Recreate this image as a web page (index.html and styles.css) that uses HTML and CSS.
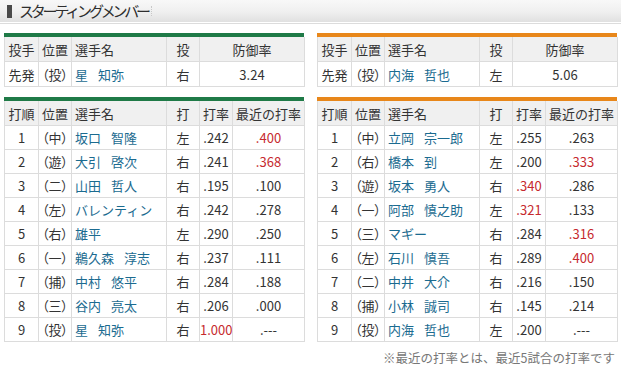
FILE: index.html
```html
<!DOCTYPE html>
<html lang="ja">
<head>
<meta charset="utf-8">
<title>スターティングメンバー</title>
<link rel="stylesheet" href="styles.css">
</head>
<body>
<div class="title-wrap">
  <div class="title-bar">
    <h2 class="title">スターティングメンバー</h2>
    <span class="title-dots"></span>
  </div>
</div>

<div class="columns">
  <div class="col">
    <div class="box green">
      <table class="pitch">
        <colgroup><col class="c-no"><col class="c-pos"><col class="c-name"><col class="c-hand"><col class="c-era"></colgroup>
        <thead><tr><th>投手</th><th>位置</th><th class="l">選手名</th><th>投</th><th>防御率</th></tr></thead>
        <tbody><tr><td>先発</td><td>（投）</td><td class="l name">星 知弥</td><td>右</td><td>3.24</td></tr></tbody>
      </table>
    </div>
    <div class="box green gap">
      <table class="bat">
        <colgroup><col class="c-no"><col class="c-pos"><col class="c-name"><col class="c-hand"><col class="c-avg"><col class="c-rec"></colgroup>
        <thead><tr><th>打順</th><th>位置</th><th class="l">選手名</th><th>打</th><th>打率</th><th>最近の打率</th></tr></thead>
        <tbody>
          <tr><td>1</td><td>（中）</td><td class="l name">坂口 智隆</td><td>左</td><td>.242</td><td class="red">.400</td></tr>
          <tr><td>2</td><td>（遊）</td><td class="l name">大引 啓次</td><td>右</td><td>.241</td><td class="red">.368</td></tr>
          <tr><td>3</td><td>（二）</td><td class="l name">山田 哲人</td><td>右</td><td>.195</td><td>.100</td></tr>
          <tr><td>4</td><td>（左）</td><td class="l name">バレンティン</td><td>右</td><td>.242</td><td>.278</td></tr>
          <tr><td>5</td><td>（右）</td><td class="l name">雄平</td><td>左</td><td>.290</td><td>.250</td></tr>
          <tr><td>6</td><td>（一）</td><td class="l name">鵜久森 淳志</td><td>右</td><td>.237</td><td>.111</td></tr>
          <tr><td>7</td><td>（捕）</td><td class="l name">中村 悠平</td><td>右</td><td>.284</td><td>.188</td></tr>
          <tr><td>8</td><td>（三）</td><td class="l name">谷内 亮太</td><td>右</td><td>.206</td><td>.000</td></tr>
          <tr><td>9</td><td>（投）</td><td class="l name">星 知弥</td><td>右</td><td class="red">1.000</td><td>.---</td></tr>
        </tbody>
      </table>
    </div>
  </div>

  <div class="col">
    <div class="box orange">
      <table class="pitch">
        <colgroup><col class="c-no"><col class="c-pos"><col class="c-name"><col class="c-hand"><col class="c-era"></colgroup>
        <thead><tr><th>投手</th><th>位置</th><th class="l">選手名</th><th>投</th><th>防御率</th></tr></thead>
        <tbody><tr><td>先発</td><td>（投）</td><td class="l name">内海 哲也</td><td>左</td><td>5.06</td></tr></tbody>
      </table>
    </div>
    <div class="box orange gap">
      <table class="bat">
        <colgroup><col class="c-no"><col class="c-pos"><col class="c-name"><col class="c-hand"><col class="c-avg"><col class="c-rec"></colgroup>
        <thead><tr><th>打順</th><th>位置</th><th class="l">選手名</th><th>打</th><th>打率</th><th>最近の打率</th></tr></thead>
        <tbody>
          <tr><td>1</td><td>（中）</td><td class="l name">立岡 宗一郎</td><td>左</td><td>.255</td><td>.263</td></tr>
          <tr><td>2</td><td>（右）</td><td class="l name">橋本 到</td><td>左</td><td>.200</td><td class="red">.333</td></tr>
          <tr><td>3</td><td>（遊）</td><td class="l name">坂本 勇人</td><td>右</td><td class="red">.340</td><td>.286</td></tr>
          <tr><td>4</td><td>（一）</td><td class="l name">阿部 慎之助</td><td>左</td><td class="red">.321</td><td>.133</td></tr>
          <tr><td>5</td><td>（三）</td><td class="l name">マギー</td><td>右</td><td>.284</td><td class="red">.316</td></tr>
          <tr><td>6</td><td>（左）</td><td class="l name">石川 慎吾</td><td>右</td><td>.289</td><td class="red">.400</td></tr>
          <tr><td>7</td><td>（二）</td><td class="l name">中井 大介</td><td>右</td><td>.216</td><td>.150</td></tr>
          <tr><td>8</td><td>（捕）</td><td class="l name">小林 誠司</td><td>右</td><td>.145</td><td>.214</td></tr>
          <tr><td>9</td><td>（投）</td><td class="l name">内海 哲也</td><td>左</td><td>.200</td><td>.---</td></tr>
        </tbody>
      </table>
    </div>
    <p class="note">※最近の打率とは、最近5試合の打率です</p>
  </div>
</div>
</body>
</html>
```

FILE: styles.css
```css
html, body {
  margin: 0;
  padding: 0;
  background: #fff;
}
body {
  font-family: "Noto Sans CJK JP", "Noto Sans", sans-serif;
  color: #333;
  font-size: 13px;
}

.title-wrap {
  border-bottom: 1px solid #dcdcdc;
}
.title-bar {
  height: 22px;
  border-bottom: 1px solid #fff;
  background: linear-gradient(#f8f8f8, #efefef 55%, #e0e0e0);
  display: flex;
  align-items: center;
}
.title {
  margin: 0;
  font-size: 15px;
  font-weight: normal;
  line-height: 22px;
  letter-spacing: -3.2px;
  color: #2e2e2e;
  display: flex;
  align-items: center;
  padding-left: 7px;
}
.title::before {
  content: "";
  display: block;
  width: 5px;
  height: 13px;
  background: #4a4a4a;
  margin-right: 7px;
}
.title-dots {
  display: block;
  width: 0;
  height: 10px;
  border-left: 1px dotted #c8c8c8;
  margin-left: 3px;
}

.columns {
  display: grid;
  grid-template-columns: 300px 300px;
  column-gap: 13px;
  padding: 0 4px;
  margin-top: 9px;
}
.col {
  display: flex;
  flex-direction: column;
}

.box {
  border-top: 4px solid;
}
.box.green { border-top-color: #1f7a47; }
.box.orange { border-top-color: #e8871a; }
.box.gap { margin-top: 10px; }

table {
  width: 300px;
  border-collapse: collapse;
  table-layout: fixed;
  border: 1px solid #dcdcdc;
  border-top: none;
}
.c-no { width: 34px; }
.c-pos { width: 33px; }
.c-name { width: 95px; }
.c-hand { width: 33px; }
.c-avg { width: 33px; }
.c-rec { width: 72px; }
.c-era { width: 105px; }

th, td {
  border: 1px solid #dcdcdc;
  padding: 0;
  text-align: center;
  white-space: nowrap;
  font-weight: normal;
  font-size: 13px;
  overflow: hidden;
}
th {
  background: #f0f0f0;
  height: 24px;
  color: #333;
}
td {
  height: 23px;
  background: #fff;
}
.pitch th { height: 24px; }
.pitch td { height: 24px; }
thead tr th { border-top: none; }

td:nth-child(2), th:nth-child(2) {
  font-feature-settings: "palt";
  letter-spacing: 0;
}
.l {
  text-align: left;
  padding-left: 3px;
}
.name {
  color: #1b6b90;
  word-spacing: 7px;
}
.red { color: #c62a2e; }

.note {
  margin: 6px 2px 0 0;
  text-align: right;
  color: #777;
  font-size: 12.5px;
  line-height: 20px;
}
```
